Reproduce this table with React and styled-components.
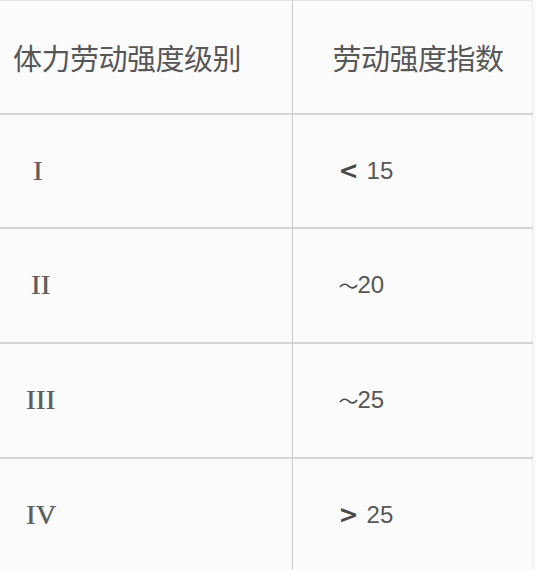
import React from "react";
import styled, { createGlobalStyle } from "styled-components";

const Global = createGlobalStyle`
  html, body { margin: 0; padding: 0; background: #fafafa; }
  body { width: 536px; height: 570px; overflow: hidden; }
`;

const Table = styled.table`
  width: 533px;
  border-collapse: collapse;
  table-layout: fixed;
  background: #fbfbfb;
  border-top: 1px solid #e4e4e4;
  border-right: 1px solid #ececec;
  color: #5a5a5a;
`;

const Row = styled.tr`
  height: ${(p) => p.$h}px;
  border-bottom: 2px solid #d4d4d4;
`;

const Cell = styled.td`
  padding: 0 0 0 ${(p) => p.$pad}px;
  vertical-align: middle;
  white-space: nowrap;
  border-left: ${(p) => (p.$divider ? "1px solid #cbcbcb" : "none")};
`;

const HeadText = styled.span`
  font-family: "Noto Sans CJK SC", "Noto Sans", sans-serif;
  font-size: 29px;
  letter-spacing: -0.5px;
  color: #575757;
`;

const Roman = styled.span`
  font-family: "Liberation Serif", "DejaVu Serif", serif;
  font-size: 28px;
  letter-spacing: 0.5px;
  color: #5e5e5e;
  text-shadow: 0.5px 0 0 #7a7a7a;
`;

const Value = styled.span`
  display: inline-flex;
  align-items: center;
  font-family: "Liberation Sans", "Noto Sans CJK SC", sans-serif;
  font-size: 24px;
  color: #575757;
`;

const Sign = styled.span`
  font-family: ${(p) => (p.$bold ? '"DejaVu Sans", sans-serif' : '"Noto Sans CJK SC", sans-serif')};
  font-size: ${(p) => p.$size}px;
  font-weight: ${(p) => (p.$bold ? 700 : 400)};
  margin-right: ${(p) => p.$gap}px;
  color: #4a4a4a;
`;

const rows = [
  { level: "I", h: 114, pad: 33, sign: "<", bold: true, gap: 8, size: 24, num: "15" },
  { level: "II", h: 115, pad: 31, sign: "～", gap: -1, size: 20, num: "20" },
  { level: "III", h: 115, pad: 26, sign: "～", gap: -1, size: 20, num: "25" },
  { level: "IV", h: 115, pad: 26, sign: ">", bold: true, gap: 8, size: 24, num: "25" },
];

export default function App() {
  return (
    <>
      <Global />
      <Table>
        <colgroup>
          <col style={{ width: 292 }} />
          <col />
        </colgroup>
        <tbody>
          <Row $h={113}>
            <Cell $pad={13}>
              <HeadText>体力劳动强度级别</HeadText>
            </Cell>
            <Cell $pad={40} $divider>
              <HeadText>劳动强度指数</HeadText>
            </Cell>
          </Row>
          {rows.map((r) => (
            <Row key={r.level} $h={r.h}>
              <Cell $pad={r.pad}>
                <Roman>{r.level}</Roman>
              </Cell>
              <Cell $pad={46} $divider>
                <Value>
                  <Sign $bold={r.bold} $gap={r.gap} $size={r.size}>
                    {r.sign}
                  </Sign>
                  {r.num}
                </Value>
              </Cell>
            </Row>
          ))}
        </tbody>
      </Table>
    </>
  );
}
